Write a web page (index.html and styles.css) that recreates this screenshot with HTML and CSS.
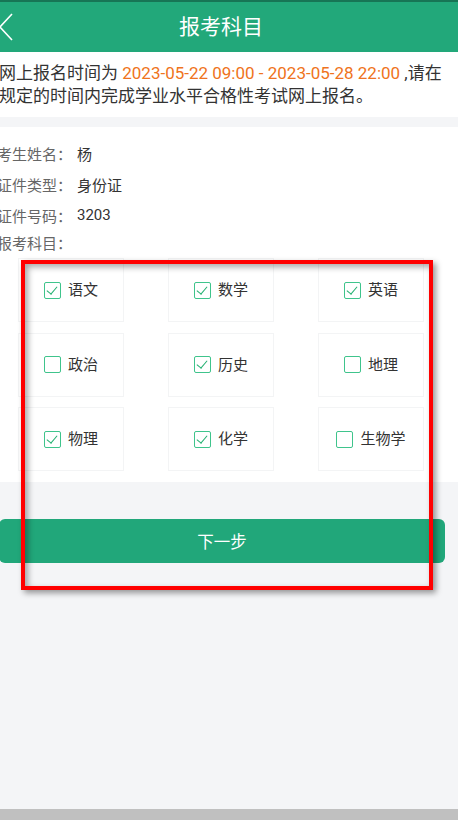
FILE: index.html
```html
<!DOCTYPE html>
<html lang="zh">
<head>
<meta charset="utf-8">
<title>报考科目</title>
<link rel="stylesheet" href="styles.css">
</head>
<body>
<div class="page">
  <header class="topbar">
    <svg class="back" width="16" height="30" viewBox="0 0 16 30"><polyline points="12,1 0,14 12,27" fill="none" stroke="#fff" stroke-width="1.6"/></svg>
    <h1 class="title">报考科目</h1>
  </header>

  <section class="notice">网上报名时间为 <span class="hl">2023-05-22 09:00 - 2023-05-28 22:00</span> ,请在规定的时间内完成学业水平合格性考试网上报名。</section>

  <section class="info">
    <div class="row"><span class="label">考生姓名：</span><span class="value">杨</span></div>
    <div class="row"><span class="label">证件类型：</span><span class="value">身份证</span></div>
    <div class="row"><span class="label">证件号码：</span><span class="value">3203</span></div>
    <div class="row row-last"><span class="label">报考科目：</span></div>

    <div class="grid">
      <label class="cell"><span class="box on"></span><span class="name">语文</span></label>
      <label class="cell"><span class="box on"></span><span class="name">数学</span></label>
      <label class="cell"><span class="box on"></span><span class="name">英语</span></label>
      <label class="cell"><span class="box"></span><span class="name">政治</span></label>
      <label class="cell"><span class="box on"></span><span class="name">历史</span></label>
      <label class="cell"><span class="box"></span><span class="name">地理</span></label>
      <label class="cell"><span class="box on"></span><span class="name">物理</span></label>
      <label class="cell"><span class="box on"></span><span class="name">化学</span></label>
      <label class="cell"><span class="box"></span><span class="name">生物学</span></label>
    </div>
  </section>

  <div class="actions">
    <button class="next">下一步</button>
  </div>

  <div class="navbar"></div>

  <div class="highlight"></div>
</div>
</body>
</html>
```

FILE: styles.css
```css
* { box-sizing: border-box; }
html, body { margin: 0; padding: 0; }
body {
  font-family: Roboto, "Noto Sans CJK SC", sans-serif;
  background: #f4f5f7;
  color: #333;
}
.page {
  position: relative;
  width: 458px;
  height: 820px;
  display: flex;
  flex-direction: column;
  overflow: hidden;
}
.topbar {
  height: 52px;
  background: #22a87a;
  border-top: 2px solid #177555;
  display: flex;
  align-items: center;
  justify-content: center;
  position: relative;
  flex: none;
}
.back {
  position: absolute;
  left: 0;
  top: 11px;
}
.title {
  margin: 0 16px 0 0;
  font-size: 21px;
  font-weight: 400;
  color: #fff;
  line-height: 24px;
}
.notice {
  background: #fff;
  padding: 9.5px 8px 9.5px 0;
  margin-left: -1px;
  font-size: 17px;
  line-height: 23px;
  color: #333;
  flex: none;
}
.hl { color: #ef7320; }
.info {
  margin-top: 10px;
  background: #fff;
  padding: 10.5px 0 11px 0;
  flex: none;
}
.row {
  display: flex;
  align-items: center;
  height: 31px;
  font-size: 15px;
}
.row-last { height: 23px; }
.label {
  width: 80px;
  margin-left: -3px;
  color: #666;
}
.value { color: #333; }
.grid {
  margin-top: 4.5px;
  padding-left: 18px;
  display: grid;
  grid-template-columns: repeat(3, 106px);
  grid-auto-rows: 64px;
  column-gap: 44px;
  row-gap: 10.5px;
}
.cell {
  border: 1px solid #f3f4f5;
  display: flex;
  align-items: center;
  justify-content: center;
  gap: 7px;
  font-size: 15px;
  color: #333;
}
.box {
  width: 17px;
  height: 17px;
  border: 1.5px solid #3fc48c;
  border-radius: 2px;
  position: relative;
  flex: none;
}
.box.on::after {
  content: "";
  position: absolute;
  left: 4px;
  top: 1px;
  width: 5px;
  height: 9px;
  border-right: 1.3px solid #22b070;
  border-bottom: 1.3px solid #22b070;
  transform: rotate(40deg);
}
.name { line-height: 20px; }
.actions {
  padding: 37px 13px 0 0;
  margin-left: -1px;
  flex: none;
}
.next {
  display: block;
  width: 100%;
  height: 44px;
  border: none;
  border-radius: 6px;
  background: #21a77a;
  color: #fff;
  font-family: inherit;
  font-size: 16.5px;
  padding: 0;
}
.navbar {
  margin-top: auto;
  height: 11px;
  background: #c0c0c0;
  flex: none;
}
.highlight {
  position: absolute;
  left: 21px;
  top: 260px;
  width: 412px;
  height: 330px;
  border: 4px solid #ff0000;
  box-shadow: 3px 3px 6px rgba(0,0,0,0.4), inset 3px 3px 6px rgba(0,0,0,0.35);
  pointer-events: none;
}
```
